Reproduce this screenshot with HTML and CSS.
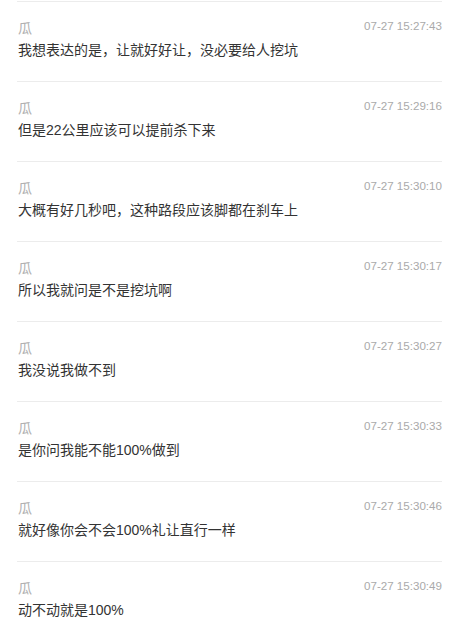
FILE: index.html
```html
<!DOCTYPE html>
<html lang="zh-CN">
<head>
  <meta charset="UTF-8">
  <title>消息记录</title>
  <link rel="stylesheet" href="styles.css">
</head>
<body>
  <ul class="msg-list">
    <li class="msg">
      <div class="msg-head"><span class="msg-name">瓜</span><span class="msg-time">07-27 15:27:43</span></div>
      <div class="msg-text">我想表达的是，让就好好让，没必要给人挖坑</div>
    </li>
    <li class="msg">
      <div class="msg-head"><span class="msg-name">瓜</span><span class="msg-time">07-27 15:29:16</span></div>
      <div class="msg-text">但是22公里应该可以提前杀下来</div>
    </li>
    <li class="msg">
      <div class="msg-head"><span class="msg-name">瓜</span><span class="msg-time">07-27 15:30:10</span></div>
      <div class="msg-text">大概有好几秒吧，这种路段应该脚都在刹车上</div>
    </li>
    <li class="msg">
      <div class="msg-head"><span class="msg-name">瓜</span><span class="msg-time">07-27 15:30:17</span></div>
      <div class="msg-text">所以我就问是不是挖坑啊</div>
    </li>
    <li class="msg">
      <div class="msg-head"><span class="msg-name">瓜</span><span class="msg-time">07-27 15:30:27</span></div>
      <div class="msg-text">我没说我做不到</div>
    </li>
    <li class="msg">
      <div class="msg-head"><span class="msg-name">瓜</span><span class="msg-time">07-27 15:30:33</span></div>
      <div class="msg-text">是你问我能不能100%做到</div>
    </li>
    <li class="msg">
      <div class="msg-head"><span class="msg-name">瓜</span><span class="msg-time">07-27 15:30:46</span></div>
      <div class="msg-text">就好像你会不会100%礼让直行一样</div>
    </li>
    <li class="msg">
      <div class="msg-head"><span class="msg-name">瓜</span><span class="msg-time">07-27 15:30:49</span></div>
      <div class="msg-text">动不动就是100%</div>
    </li>
  </ul>
</body>
</html>
```

FILE: styles.css
```css
body {
  margin: 0;
  background: #fff;
  font-family: "Liberation Sans", "Noto Sans CJK SC", sans-serif;
}

.msg-list {
  list-style: none;
  margin: 0 23px 0 17px;
  padding: 1px 0 0;
}

.msg {
  box-sizing: border-box;
  height: 80px;
  border-top: 1px solid #ececec;
  padding-top: 16px;
}

.msg-head {
  display: flex;
  justify-content: space-between;
  align-items: center;
  height: 18px;
}

.msg-name {
  font-size: 14px;
  color: #b0b0b0;
  padding-left: 1px;
}

.msg-time {
  font-size: 11.6px;
  color: #aaa;
  margin-top: -3px;
}

.msg-text {
  margin-top: 4px;
  padding-left: 1px;
  font-size: 14px;
  line-height: 20px;
  color: #333;
}
```
